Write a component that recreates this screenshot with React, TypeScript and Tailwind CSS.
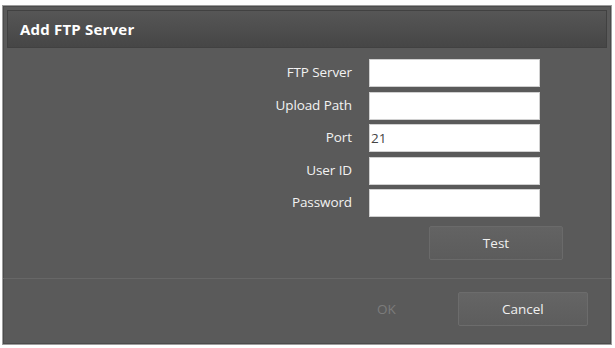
import React from "react";

const font = { fontFamily: '"Open Sans", "Noto Sans", "DejaVu Sans", sans-serif' };

function Row({ label, value }: { label: string; value?: string }) {
  return (
    <div className="flex items-center h-[28px]">
      <div className="w-[345px] text-right text-[13.5px] text-[#f2f2f2] leading-none tracking-[-0.1px]">{label}</div>
      <div className="ml-[17px] w-[171px] h-[28px] bg-white border border-[#d0d0d0] flex items-center pl-[1px] text-[13.5px] text-[#444]">
        {value}
      </div>
    </div>
  );
}

export default function App() {
  return (
    <div className="w-[615px] h-[348px] bg-white pt-[5px] pl-[2px]" style={font}>
      <div className="w-[610px] h-[340px] bg-[#5a5a5a] border border-[#9c9c9c] p-[4px] flex flex-col shadow-[inset_0_0_0_1px_#4c4c4c]">
        <div className="h-[38px] shrink-0 bg-gradient-to-b from-[#565656] to-[#464646] border border-[#414141] flex items-center pl-[12px] text-[15px] font-bold text-white tracking-[0.2px]">
          Add FTP Server
        </div>
        <div className="flex flex-col gap-[4.5px] pt-[11px]">
          <Row label="FTP Server" />
          <Row label="Upload Path" />
          <Row label="Port" value="21" />
          <Row label="User ID" />
          <Row label="Password" />
        </div>
        <div className="flex pl-[422px] mt-[9px]">
          <div className="w-[134px] h-[34px] rounded-[2px] bg-gradient-to-b from-[#636363] to-[#5c5c5c] border border-[#6a6a6a] flex items-center justify-center text-[13.5px] text-[#f0f0f0]">
            Test
          </div>
        </div>
        <div className="mt-[18px] h-[1px] bg-[#676767] -mx-[4px]"></div>
        <div className="flex items-center pt-[13px]">
          <div className="w-[370px] shrink-0"></div>
          <div className="text-[13.5px] text-[#7c7c7c]">OK</div>
          <div className="ml-[62px] w-[130px] h-[34px] rounded-[2px] bg-gradient-to-b from-[#656565] to-[#5d5d5d] border border-[#6c6c6c] flex items-center justify-center text-[13.5px] text-[#f0f0f0]">
            Cancel
          </div>
        </div>
        <div className="flex-1"></div>
      </div>
    </div>
  );
}
